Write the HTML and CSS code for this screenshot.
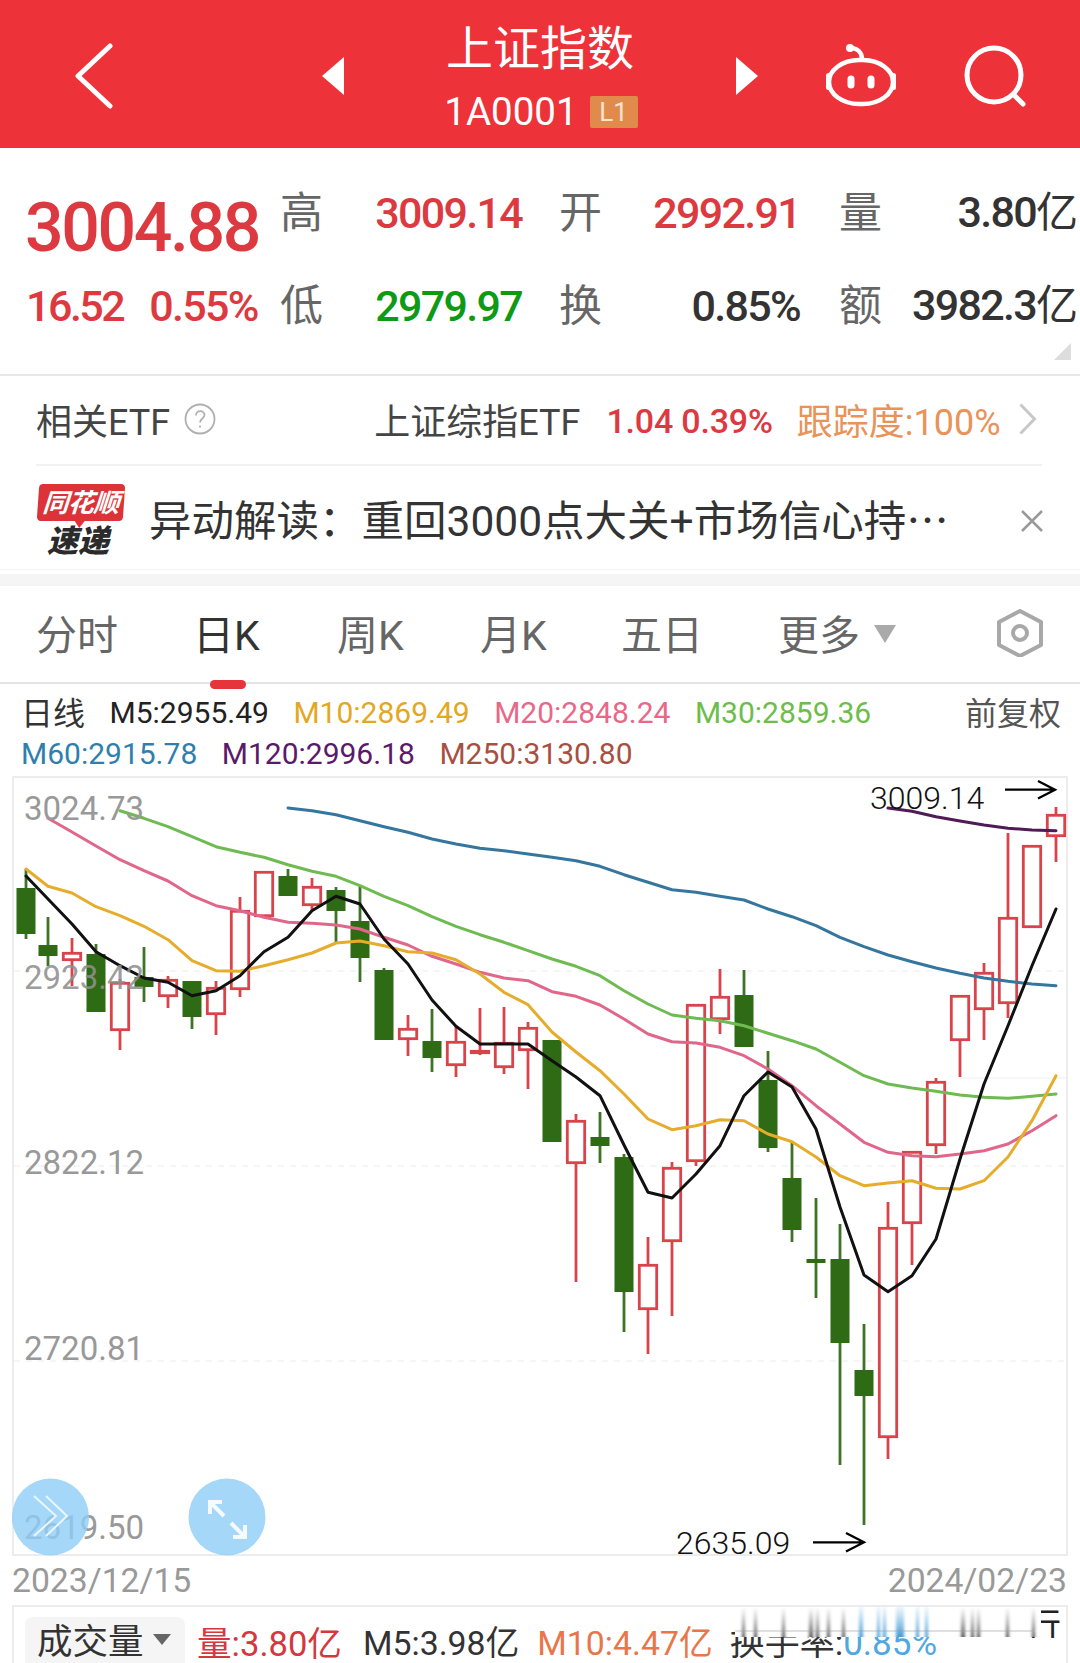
FILE: index.html
```html
<!DOCTYPE html>
<html lang="zh-CN">
<head>
<meta charset="utf-8">
<title>上证指数</title>
<link rel="stylesheet" href="styles.css">
</head>
<body>
<div class="page">
  <header class="header">
    <div class="header-left">
      <svg class="back" width="40" height="66" viewBox="74 41 40 66"><path d="M110 44 78 74l32 30"/></svg>
      <svg class="prev" width="22" height="38" viewBox="322 57 22 38"><path d="M344 57v38l-22-19z"/></svg>
    </div>
    <div class="title-block">
      <div class="title">上证指数</div>
      <div class="code"><span>1A0001</span><span class="badge">L1</span></div>
    </div>
    <div class="header-right">
      <svg class="next" width="22" height="38" viewBox="736 57 22 38"><path d="M736 57v38l22-19z"/></svg>
      <svg class="robot" width="70" height="64" viewBox="826 43 70 64">
        <rect x="829" y="59" width="64" height="44" rx="30" ry="22"/>
        <path d="M850 47c8 0 12 5 12 11"/>
        <circle class="solid" cx="850" cy="47" r="4"/>
        <rect class="solid" x="847.500" y="74.500" width="7" height="13" rx="3.500"/>
        <rect class="solid" x="867.500" y="74.500" width="7" height="13" rx="3.500"/>
        <rect class="solid" x="826" y="72" width="5" height="17" rx="2.500"/>
        <rect class="solid" x="891" y="72" width="5" height="17" rx="2.500"/>
      </svg>
      <svg class="search" width="62" height="62" viewBox="964 44 62 62"><circle cx="994" cy="74" r="27"/><path d="m1014 94 9 9"/></svg>
    </div>
  </header>

  <section class="quote">
    <div class="price">3004.88</div>
    <div class="q-label">高</div>
    <div class="q-val red">3009.14</div>
    <div class="q-label">开</div>
    <div class="q-val red pad2">2992.91</div>
    <div class="q-label">量</div>
    <div class="q-val dark last">3.80<span class="unit">亿</span></div>
    <div class="change"><span>16.52</span><span>0.55%</span></div>
    <div class="q-label">低</div>
    <div class="q-val green">2979.97</div>
    <div class="q-label">换</div>
    <div class="q-val dark pad2">0.85%</div>
    <div class="q-label">额</div>
    <div class="q-val dark last">3982.3<span class="unit">亿</span></div>
    <span class="corner"></span>
  </section>

  <section class="etf">
    <div class="etf-row">
      <span class="etf-title">相关ETF</span>
      <svg class="help" width="32" height="32" viewBox="0 0 32 32"><circle cx="16" cy="16" r="14.500"/><path d="M12 12.500c0-6 8.500-5.500 8.500-.5 0 3.500-4.500 3.500-4.500 7.500"/><path d="M16 22.500v2"/></svg>
      <span class="etf-name">上证综指ETF</span>
      <span class="etf-num">1.04 0.39%</span>
      <span class="etf-track">跟踪度:100%</span>
      <svg class="etf-arrow" width="18" height="32" viewBox="0 0 18 32"><path d="m1.500 1.500 14 14.500-14 14.500"/></svg>
    </div>
  </section>

  <section class="news">
    <div class="logo">
      <div class="logo-top"><span>同花顺</span></div>
      <div class="logo-bottom">速递</div>
    </div>
    <p class="news-text">异动解读：重回3000点大关+市场信心持⋯</p>
    <svg class="close" width="24" height="24" viewBox="0 0 24 24"><path d="m2 2 20 20M22 2 2 22"/></svg>
  </section>
  <div class="band"></div>

  <nav class="tabs">
    <span class="tab">分时</span>
    <span class="tab active">日K</span>
    <span class="tab">周K</span>
    <span class="tab">月K</span>
    <span class="tab">五日</span>
    <span class="tab more">更多<i class="more-caret"></i></span>
    <svg class="hex" width="48" height="48" viewBox="996 610 48 48"><path d="m1020 612 21 11v23l-21 11-21-11v-23z"/><circle cx="1020" cy="634" r="7"/></svg>
  </nav>

  <section class="legend">
    <div class="legend-row">
      <span class="legend-name">日线</span>
      <span class="m5">M5:2955.49</span>
      <span class="m10">M10:2869.49</span>
      <span class="m20">M20:2848.24</span>
      <span class="m30">M30:2859.36</span>
      <span class="adjust">前复权</span>
    </div>
    <div class="legend-row">
      <span class="m60">M60:2915.78</span>
      <span class="m120">M120:2996.18</span>
      <span class="m250">M250:3130.80</span>
    </div>
  </section>

  <section class="chart">
    <svg class="chart-svg" width="1080" height="780" viewBox="0 777 1080 780">
      <rect class="frame" x="13" y="778" width="1054" height="778"/>
      <path class="grid" d="M14 972H1066M14 1167H1066M14 1362H1066"/>
      <path class="faint" d="M960 1079H1067"/>

      <path class="wick-g" d="M26 870V940M48 918V967M96 945V1013M144 948V1003M192 982V1030M288 870V897M336 888V943M360 887V983M384 969V1041M432 1010V1073M600 1113V1164M624 1155V1333M744 971V1048M768 1052V1153M792 1144V1243M816 1199V1299M840 1225V1466M864 1325V1526"/>
      <path class="wick-r" d="M72 939V987M120 980V1051M168 977V1009M216 982V1036M240 898V998M312 879V912M408 1016V1057M456 1027V1078M480 1009V1056M504 1008V1075M528 1023V1090M576 1115V1283M648 1238V1355M672 1163V1317M696 1005V1167M720 970V1035M888 1203V1460M912 1152V1266M936 1079V1155M960 996V1078M984 964V1041M1008 834V1019M1056 808V863"/>

      <g class="body-g">
        <rect x="16.500" y="889" width="19" height="46"/>
        <rect x="38.500" y="946" width="19" height="11"/>
        <rect x="86.500" y="955" width="19" height="58"/>
        <rect x="134.500" y="978" width="19" height="10"/>
        <rect x="182.500" y="982" width="19" height="36"/>
        <rect x="278.500" y="877" width="19" height="20"/>
        <rect x="326.500" y="891" width="19" height="21"/>
        <rect x="350.500" y="922" width="19" height="37"/>
        <rect x="374.500" y="971" width="19" height="70"/>
        <rect x="422.500" y="1042" width="19" height="17"/>
        <rect x="542.500" y="1041" width="19" height="102"/>
        <rect x="590.500" y="1138" width="19" height="9"/>
        <rect x="614.500" y="1158" width="19" height="135"/>
        <rect x="734.500" y="996" width="19" height="52"/>
        <rect x="758.500" y="1081" width="19" height="68"/>
        <rect x="782.500" y="1179" width="19" height="52"/>
        <rect x="806.500" y="1260" width="19" height="4"/>
        <rect x="830.500" y="1260" width="19" height="84"/>
        <rect x="854.500" y="1371" width="19" height="26"/>
      </g>
      <g class="body-r">
        <rect x="63.300" y="954.300" width="17.400" height="6.400"/>
        <rect x="111.300" y="984.300" width="17.400" height="46.400"/>
        <rect x="159.300" y="981.300" width="17.400" height="15.400"/>
        <rect x="207.300" y="989.300" width="17.400" height="25.400"/>
        <rect x="231.300" y="912.300" width="17.400" height="77.400"/>
        <rect x="255.300" y="873.300" width="17.400" height="43.400"/>
        <rect x="303.300" y="888.300" width="17.400" height="17.400"/>
        <rect x="399.300" y="1030.300" width="17.400" height="9.400"/>
        <rect x="447.300" y="1043.300" width="17.400" height="22.400"/>
        <rect x="471.300" y="1052.300" width="17.400" height="1.400"/>
        <rect x="495.300" y="1044.300" width="17.400" height="23.400"/>
        <rect x="519.300" y="1029.300" width="17.400" height="21.400"/>
        <rect x="567.300" y="1122.300" width="17.400" height="41.400"/>
        <rect x="639.300" y="1266.300" width="17.400" height="43.400"/>
        <rect x="663.300" y="1169.300" width="17.400" height="72.400"/>
        <rect x="687.300" y="1006.300" width="17.400" height="155.400"/>
        <rect x="711.300" y="998.300" width="17.400" height="21.400"/>
        <rect x="879.300" y="1229.300" width="17.400" height="208.400"/>
        <rect x="903.300" y="1153.300" width="17.400" height="70.400"/>
        <rect x="927.300" y="1083.300" width="17.400" height="62.400"/>
        <rect x="951.300" y="997.300" width="17.400" height="43.400"/>
        <rect x="975.300" y="974.300" width="17.400" height="35.400"/>
        <rect x="999.300" y="919.300" width="17.400" height="84.400"/>
        <rect x="1023.300" y="847.300" width="17.400" height="80.400"/>
        <rect x="1047.300" y="816.300" width="17.400" height="20.400"/>
      </g>

      <polyline class="line l60" points="288,809 312,811.700 336,815.700 360,821.700 384,827.700 408,833.300 432,840 456,845 480,849.300 504,851.700 528,855 552,858.300 576,861.700 600,867.300 624,875.700 648,883.300 672,890.700 696,893.300 720,897.300 744,901 768,910 792,917.700 816,926.700 840,938.300 864,947.700 888,956 912,962.700 936,969 960,974.300 984,979 1008,982.300 1032,985 1056,986.700"/>
      <polyline class="line l120" points="888,809 912,812.300 936,817.700 960,822 984,826 1008,829.300 1032,831 1056,831.700"/>
      <polyline class="line l30" points="120,811.700 144,819.300 168,827.700 192,837.700 216,847.700 240,853.300 264,858.300 288,865.700 312,872.300 336,877.300 360,886.700 384,897.300 408,906.700 432,917.700 456,927.300 480,935.700 504,943.300 528,951.700 552,960 576,967.300 600,976.700 624,991.700 648,1005 672,1016 696,1019.300 720,1021.700 744,1026.700 768,1034.300 792,1041.700 816,1050 840,1063.300 864,1076.700 888,1085 912,1089 936,1092.300 960,1096 984,1098.300 1008,1099.300 1032,1097.300 1056,1095"/>
      <polyline class="line l20" points="48,819.300 72,833 96,847 120,860.700 144,871.700 168,882 192,896.700 216,906.700 240,911.700 264,918.300 288,923.300 312,924.300 336,926 360,930 384,938.300 408,946 432,957.300 456,965 480,973.300 504,979 528,981.700 552,992.700 576,997.300 600,1006 624,1020 648,1035 672,1042.700 696,1044 720,1048.300 744,1056.700 768,1070 792,1086.700 816,1106.700 840,1125 864,1143.300 888,1153.300 912,1156.700 936,1157.700 960,1155 984,1151.700 1008,1145 1032,1131.700 1056,1116.700"/>
      <polyline class="line l10" points="26,870 48,887.300 72,894 96,907.700 120,916.700 144,927.300 168,940.700 192,961.700 216,971.700 240,972.300 264,966.700 288,960.700 312,954 336,944 360,942 384,946.700 408,952.700 432,954 456,960.700 480,975 504,993.300 528,1005.700 552,1033 576,1053 600,1071.700 624,1095 648,1120 672,1130.700 696,1126.700 720,1120.700 744,1121.700 768,1135 792,1142.700 816,1158 840,1176.700 864,1186.700 888,1184 912,1181.700 936,1189.300 960,1190 984,1181.700 1008,1158 1032,1121.700 1056,1076.700"/>
      <polyline class="line l5" points="26,877 48,900 72,925 96,952.700 120,966.700 144,979 168,983.300 192,996.700 216,991.700 240,976.700 264,952.700 288,938.300 312,911.700 336,897.300 360,905 384,940 408,965 432,1001 456,1027.300 480,1045 504,1045 528,1045 552,1061.700 576,1078 600,1096.700 624,1146 648,1193.300 672,1199 696,1175 720,1146.700 744,1096.700 768,1073 792,1088 816,1130 840,1208 864,1276 888,1292.700 912,1276.700 936,1240 960,1160 984,1085 1008,1026.700 1032,966.700 1056,910"/>

      <text class="axis" x="24" y="821">3024.73</text>
      <text class="axis axis-over" x="24" y="990">2923.42</text>
      <text class="axis" x="24" y="1175">2822.12</text>
      <text class="axis" x="24" y="1361">2720.81</text>
      <text class="axis" x="24" y="1540">2619.50</text>

      <text class="mark" x="870" y="810">3009.14</text>
      <path class="arrow" d="M1005 790.700H1055M1038 782l17 8.700-17 8.700"/>
      <text class="mark" x="676" y="1555">2635.09</text>
      <path class="arrow" d="M813 1543.300H864M846 1534l18 9.300-18 9.300"/>

      <circle class="fab" cx="50.500" cy="1518" r="38.500"/>
      <circle class="fab" cx="227" cy="1518" r="38.500"/>
      <path class="fab-ico" d="m34 1497 22 20-22 20M46 1497l21 20-21 20"/>
      <path class="fab-ico bold" d="m210 1503 14 14M231 1524l14 14M210 1515v-12h12M245 1526v12h-12"/>
    </svg>
  </section>

  <section class="dates"><span>2023/12/15</span><span>2024/02/23</span></section>

  <section class="volume">
    <div class="vol-select"><span>成交量</span><i class="vol-caret"></i></div>
    <span class="vol-main">量:3.80亿</span>
    <span class="vol-m5">M5:3.98亿</span>
    <span class="vol-m10">M10:4.47亿</span>
    <span class="vol-turn">换手率:<b>0.85%</b></span>
    <svg class="smear" width="360" height="57" viewBox="720 1606 360 57">
      <defs>
        <linearGradient id="fadeDark" gradientUnits="userSpaceOnUse" x1="0" y1="1608" x2="0" y2="1638"><stop offset="0" stop-color="#666" stop-opacity="0"/><stop offset="1" stop-color="#333" stop-opacity=".85"/></linearGradient>
        <linearGradient id="fadeBlue" gradientUnits="userSpaceOnUse" x1="0" y1="1608" x2="0" y2="1638"><stop offset="0" stop-color="#4fa8e0" stop-opacity=".1"/><stop offset="1" stop-color="#2f8fd0" stop-opacity=".9"/></linearGradient>
        <filter id="soft" x="-20%" y="-5%" width="140%" height="110%"><feGaussianBlur stdDeviation="1.500 .4"/></filter>
      </defs>
      <text class="smear-text" x="1025" y="1640">行</text>
      <rect class="smear-bg" x="1020" y="1639" width="44" height="14"/>
      <rect class="smear-bg" x="735" y="1607" width="306" height="31"/>
      <g filter="url(#soft)">
        <g fill="url(#fadeDark)">
          <rect x="742" y="1608" width="3" height="30"/><rect x="754" y="1608" width="3" height="30"/><rect x="782" y="1608" width="3" height="30"/><rect x="809" y="1608" width="4" height="30"/><rect x="816" y="1608" width="3" height="30"/><rect x="827" y="1608" width="3" height="30"/><rect x="842" y="1608" width="3" height="30"/><rect x="961" y="1608" width="4" height="30"/><rect x="971" y="1608" width="3" height="30"/><rect x="977" y="1608" width="3" height="30"/><rect x="1006" y="1608" width="3" height="30"/><rect x="1032" y="1608" width="3" height="30"/>
        </g>
        <g fill="url(#fadeBlue)">
          <rect x="859" y="1608" width="4" height="30"/><rect x="877" y="1608" width="3" height="30"/><rect x="883" y="1608" width="3" height="30"/><rect x="896" y="1608" width="8" height="30"/><rect x="916" y="1608" width="3" height="30"/><rect x="925" y="1608" width="3" height="30"/>
        </g>
        <rect class="smear-line" x="735" y="1631" width="300" height="2"/>
      </g>
    </svg>
  </section>
</div>
</body>
</html>
```
FILE: styles.css
```css
* { box-sizing: border-box; }
html, body { margin: 0; padding: 0; }
body { background: #fff; font-family: Roboto, "Noto Sans CJK SC", sans-serif; color: #333; }
.page { width: 1080px; height: 1663px; overflow: hidden; display: flex; flex-direction: column; }

/* header */
.header { height: 148px; background: #ee3239; display: grid; grid-template-columns: 444px 192px 444px; align-items: center; color: #fff; flex: none; }
.header svg { display: block; flex: none; fill: none; stroke: #fff; }
.header-left { display: flex; align-items: center; padding-left: 74px; padding-top: 4px; }
.header-left .prev { margin-left: auto; margin-right: 100px; }
.header-right { display: flex; align-items: center; padding-left: 100px; padding-top: 4px; }
.prev path, .next path { fill: #fff; stroke: none; }
.back path { stroke-width: 5; stroke-linecap: round; stroke-linejoin: round; }
.robot { margin-left: 68px; stroke-width: 4.500; }
.robot .solid { fill: #fff; stroke: none; }
.robot path { stroke-linecap: round; }
.search { margin-left: 68px; stroke-width: 5; }
.search path { stroke-linecap: round; }
.title-block { display: flex; flex-direction: column; align-items: center; }
.title { font-size: 47px; line-height: 56px; margin-top: 17px; white-space: nowrap; }
.code { display: flex; align-items: center; gap: 12px; font-size: 38.500px; line-height: 36px; margin: 17px 0 14px 2px; white-space: nowrap; font-weight: 400; }
.badge { width: 48px; height: 32px; background: #e08b4c; color: #fbe5d2; border-radius: 2px; font-size: 26px; line-height: 32px; text-align: center; font-weight: 400; }

/* quote */
.quote { position: relative; height: 228px; padding: 17px 0 0 27px; border-bottom: 2px solid #e8e8e8; display: grid; grid-template-columns: 254px 41px 238px 42px 238px 41px 197px; grid-template-rows: 95px 91px; align-items: center; flex: none; }
.price { font-size: 68px; font-weight: 500; color: #dc3a40; letter-spacing: -2.400px; margin-left: -2px; padding-top: 30px; line-height: 70px; white-space: nowrap; }
.change { display: flex; gap: 26px; font-size: 43px; color: #dc3a40; letter-spacing: -1.700px; white-space: nowrap; font-weight: 500; margin-left: -1px; }
.change span:first-child { letter-spacing: -2.500px; }
.q-label { font-size: 43px; color: #666; line-height: 50px; font-weight: 400; white-space: nowrap; margin-left: -1px; }
.q-val { font-size: 43px; font-weight: 500; text-align: right; padding-right: 38px; letter-spacing: -1.700px; white-space: nowrap; line-height: 50px; }
.q-val.pad2 { padding-right: 40px; }
.q-val.last { padding-right: 0; }
.unit { font-weight: 400; font-size: 42px; letter-spacing: 0; }
.red { color: #dc3a40; }
.green { color: #0f9a16; }
.dark { color: #333; }
.corner { position: absolute; right: 9px; bottom: 14px; width: 0; height: 0; border-left: 17px solid transparent; border-bottom: 17px solid #ddd; }

/* etf */
.etf { padding: 0 38px 0 36px; flex: none; }
.etf-row { height: 90px; display: flex; align-items: center; border-bottom: 2px solid #f2f2f2; padding-bottom: 2px; white-space: nowrap; }
.etf-title, .etf-name { font-size: 36px; color: #444; font-weight: 400; }
.help { margin-left: 14px; fill: none; stroke: #b0b0b0; stroke-width: 1.800; }
.etf-name { margin-left: 158px; }
.etf-num { margin-left: 26px; margin-top: 4px; font-size: 34px; color: #dc3a40; font-weight: 500; letter-spacing: -.200px; }
.etf-track { margin-left: 24px; font-size: 36px; color: #e8935a; font-weight: 400; }
.etf-arrow { margin-left: 18px; fill: none; stroke: #c8c8c8; stroke-width: 3; }

/* news */
.news { height: 104px; display: flex; align-items: center; padding: 6px 0 0 38px; border-bottom: 1px solid #f5f5f5; flex: none; position: relative; }
.logo { width: 86px; flex: none; display: flex; flex-direction: column; align-items: center; }
.logo-top { position: relative; width: 86px; height: 37px; background: #dc3338; border-radius: 4px; transform: skewX(-4deg); display: flex; align-items: center; justify-content: center; }
.logo-top::after { content: ""; position: absolute; left: 38px; bottom: -7px; border-style: solid; border-color: #dc3338 transparent transparent; border-width: 7px 5px 0; }
.logo-top span { color: #fff; font-size: 26px; font-weight: 700; font-style: italic; line-height: 30px; white-space: nowrap; letter-spacing: -.500px; }
.logo-bottom { margin-top: 6px; margin-left: -6px; font-size: 31px; line-height: 30px; font-weight: 900; font-style: italic; color: #2b2b2b; white-space: nowrap; }
.news-text { margin: 2px 0 0 25px; font-size: 42.500px; line-height: 50px; color: #333; font-weight: 400; white-space: nowrap; }
.close { position: absolute; right: 36px; top: 43px; fill: none; stroke: #999; stroke-width: 2.500; }
.band { height: 16px; flex: none; background: linear-gradient(#fff 4px, #f5f5f5 4px); }

/* tabs */
.tabs { height: 98px; padding: 0 0 4px 36px; display: grid; grid-template-columns: 157px 144px 143px 141px 157px 1fr 84px; align-items: center; border-bottom: 2px solid #e4e4e4; position: relative; flex: none; }
.tab { font-size: 41px; color: #666; font-weight: 400; position: relative; white-space: nowrap; }
.tab.active { color: #333; font-weight: 400; }
.tab.active::after { content: ""; position: absolute; left: 17px; bottom: -27px; width: 36px; height: 9px; background: #e5343a; border-radius: 5px; }
.more { display: flex; align-items: center; }
.more-caret { margin-left: 14px; margin-top: 3px; border-style: solid; border-width: 18px 11px 0; border-color: #aaa transparent transparent; }
.hex { grid-column: 7; fill: none; stroke: #a8a8a8; stroke-width: 4; stroke-linejoin: round; display: block; margin-top: 2px; }

/* legend */
.legend { height: 92px; padding: 8px 0 0 21px; font-size: 30px; flex: none; }
.legend-row { display: flex; gap: 24.500px; height: 41px; align-items: center; white-space: nowrap; }
.legend-name { color: #333; font-weight: 400; font-size: 32px; margin-top: -4px; }
.m5 { color: #222; } .m10 { color: #e3a823; } .m20 { color: #e8688a; } .m30 { color: #6dbd4a; }
.m60 { color: #2f7fae; } .m120 { color: #5a1a6a; } .m250 { color: #a8503f; }
.adjust { margin-left: auto; margin-right: 19px; margin-top: -4px; font-size: 32px; color: #555; font-weight: 400; }

/* chart */
.chart { height: 780px; flex: none; }
.chart-svg { display: block; overflow: visible; }
.frame { fill: none; stroke: #ececec; stroke-width: 2; }
.grid { fill: none; stroke: #ececec; stroke-width: 1; stroke-dasharray: 6 6; }
.faint { stroke: #efefef; stroke-width: 1; }
.wick-g { fill: none; stroke: #3f7326; stroke-width: 2.800; }
.wick-r { fill: none; stroke: #d8434c; stroke-width: 2.800; }
.body-g rect { fill: #2f6b14; }
.body-r rect { fill: #fff; stroke: #d8434c; stroke-width: 2.800; }
.line { fill: none; stroke-linejoin: round; stroke-linecap: round; stroke-width: 3; }
.l5 { stroke: #111; }
.l10 { stroke: #e6ac2c; }
.l20 { stroke: #e0668a; }
.l30 { stroke: #6fbb52; }
.l60 { stroke: #35769f; }
.l120 { stroke: #4f1a55; }
.axis { font-size: 33px; fill: #999; font-family: Roboto, sans-serif; }
.axis-over { fill: #8f8f8f; fill-opacity: .9; }
.mark { font-size: 32px; fill: #111; font-family: Roboto, sans-serif; font-weight: 300; }
.arrow { fill: none; stroke: #000; stroke-width: 2.300; }
.fab { fill: #8fcdf7; fill-opacity: .8; }
.fab-ico { fill: none; stroke: #eaf6ff; stroke-width: 2; }
.fab-ico.bold { stroke: #f4faff; stroke-width: 4; }

/* dates */
.dates { height: 49px; padding: 0 13px 0 12px; display: flex; justify-content: space-between; align-items: center; font-size: 33.700px; color: #999; flex: none; }

/* volume */
.volume { position: relative; flex: 1; margin-left: 12px; margin-right: 12px; padding-top: 19px; border: solid #ececec; border-width: 2px 2px 0; display: flex; align-items: flex-start; gap: 21px; font-size: 33.800px; line-height: 36px; white-space: nowrap; overflow: hidden; }
.vol-select { width: 160px; height: 46px; margin: -9px -9px 0 11px; background: #f5f5f5; border-radius: 8px 8px 0 0; padding: 4px 0 0 12px; display: flex; align-items: center; flex: none; }
.vol-select span { font-size: 35.500px; color: #333; font-weight: 400; line-height: 36px; }
.vol-caret { margin-left: 9px; margin-top: -6px; border-style: solid; border-width: 11px 9px 0; border-color: #666 transparent transparent; }
.vol-main { color: #d4383f; font-size: 34.600px; }
.vol-m5 { color: #333; margin-right: -3px; }
.vol-m10 { color: #e8764a; margin-right: -4px; }
.vol-turn { color: #333; font-size: 35px; }
.vol-turn b { color: #4fa8e0; font-weight: 400; }
.smear { position: absolute; left: 706px; top: -2px; }
.smear-bg { fill: #fff; }
.smear-line { fill: #999; fill-opacity: .3; }
.smear-text { font-size: 36px; fill: #222; font-family: "Noto Sans CJK SC", sans-serif; }
```
